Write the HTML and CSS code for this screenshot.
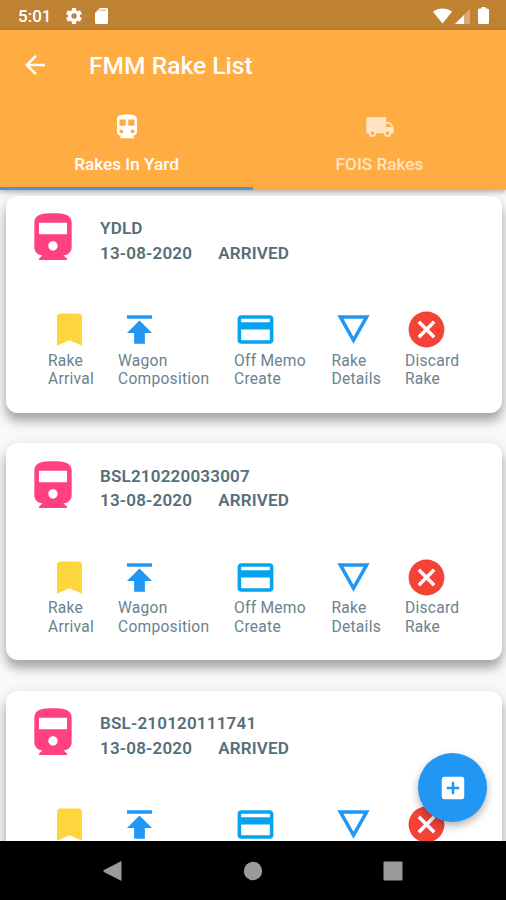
FILE: index.html
```html
<!DOCTYPE html>
<html lang="en">
<head>
<meta charset="utf-8">
<title>FMM Rake List</title>
<link rel="stylesheet" href="styles.css">
</head>
<body>
<svg class="sprite" aria-hidden="true">
  <symbol id="railway" viewBox="0 0 24 24"><path d="M4 15.5C4 17.43 5.57 19 7.5 19L6 20.5v.5h12v-.5L16.5 19c1.93 0 3.5-1.57 3.5-3.5V5c0-3.5-3.58-4-8-4s-8 .5-8 4v10.5zm8 1.5c-1.1 0-2-.9-2-2s.9-2 2-2 2 .9 2 2-.9 2-2 2zm6-7H6V5h12v5z"/></symbol>
  <symbol id="bookmark" viewBox="0 0 24 24"><path d="M17 3H7c-1.1 0-1.99.9-1.99 2L5 21l7-3 7 3V5c0-1.1-.9-2-2-2z"/></symbol>
  <symbol id="publish" viewBox="0 0 24 24"><path d="M5 4v2h14V4H5zm0 10h4v6h6v-6h4l-7-7-7 7z"/></symbol>
  <symbol id="card" viewBox="0 0 24 24"><path d="M20 4H4c-1.11 0-1.99.89-1.99 2L2 18c0 1.11.89 2 2 2h16c1.11 0 2-.89 2-2V6c0-1.11-.89-2-2-2zm0 14H4v-6h16v6zm0-10H4V6h16v2z"/></symbol>
  <symbol id="details" viewBox="0 0 24 24"><path d="M3 4l9 16 9-16H3zm3.38 2h11.25L12 16 6.38 6z"/></symbol>
  <symbol id="cancel" viewBox="0 0 24 24"><path d="M12 2C6.47 2 2 6.47 2 12s4.47 10 10 10 10-4.47 10-10S17.53 2 12 2zm5 13.59L15.59 17 12 13.41 8.41 17 7 15.59 10.59 12 7 8.41 8.41 7 12 10.59 15.59 7 17 8.41 13.41 12 17 15.59z"/></symbol>
</svg>
<div class="screen">
  <div class="status">
    <span class="clock">5:01</span>
    <svg class="gear" viewBox="2 2 20 20"><path d="M19.43 12.98c.04-.32.07-.64.07-.98s-.03-.66-.07-.98l2.11-1.65c.19-.15.24-.42.12-.64l-2-3.46c-.12-.22-.39-.3-.61-.22l-2.49 1c-.52-.4-1.08-.73-1.69-.98l-.38-2.65C14.46 2.18 14.25 2 14 2h-4c-.25 0-.46.18-.49.42l-.38 2.65c-.61.25-1.17.59-1.69.98l-2.49-1c-.23-.09-.49 0-.61.22l-2 3.46c-.13.22-.07.49.12.64l2.11 1.65c-.04.32-.07.65-.07.98s.03.66.07.98l-2.11 1.65c-.19.15-.24.42-.12.64l2 3.46c.12.22.39.3.61.22l2.49-1c.52.4 1.08.73 1.69.98l.38 2.65c.03.24.24.42.49.42h4c.25 0 .46-.18.49-.42l.38-2.65c.61-.25 1.17-.59 1.69-.98l2.49 1c.23.09.49 0 .61-.22l2-3.46c.12-.22.07-.49-.12-.64l-2.11-1.65zM12 15.5c-1.93 0-3.5-1.57-3.5-3.5s1.57-3.5 3.5-3.5 3.5 1.57 3.5 3.5-1.57 3.5-3.5 3.5z"/></svg>
    <svg class="sd" viewBox="0 0 13 16"><path d="M5 0h6.500Q13 0 13 1.500v13q0 1.500-1.500 1.500h-10Q0 16 0 14.500V5z"/><path class="sd-slots" d="M5 1.500h6v1.300H4z"/></svg>
    <svg class="wifi" viewBox="0 0 20 16"><path d="M0 3.500C6-1 14-1 20 3.500L10 16z"/></svg>
    <svg class="signal" viewBox="0 0 15 15"><path class="faint" d="M15 0v15H0z"/><path d="M9 6v9H0z"/></svg>
    <svg class="battery" viewBox="0 0 11 17"><path d="M3.500 0h4v1.500h2Q11 1.500 11 3v12.500Q11 17 9.500 17h-8Q0 17 0 15.500V3q0-1.500 1.500-1.500h2z"/></svg>
  </div>
  <header class="appbar">
    <div class="titlebar">
      <svg class="back" viewBox="0 0 24 24"><path d="M20 11H7.830l5.590-5.590L12 4l-8 8 8 8 1.410-1.410L7.830 13H20v-2z"/></svg>
      <h1>FMM Rake List</h1>
    </div>
    <nav class="tabs">
      <div class="tab active">
        <svg viewBox="0 0 24 24"><path d="M12 2c-4.420 0-8 .5-8 4v9.500C4 17.430 5.570 19 7.500 19L6 20.500v.5h12v-.5L16.500 19c1.930 0 3.500-1.570 3.500-3.500V6c0-3.500-3.580-4-8-4zM7.500 17c-.83 0-1.500-.67-1.500-1.500S6.670 14 7.500 14s1.500.67 1.500 1.500S8.330 17 7.500 17zm3.500-6H6V6h5v5zm5.500 6c-.83 0-1.500-.67-1.500-1.500s.67-1.500 1.500-1.500 1.500.67 1.500 1.500-.67 1.500-1.500 1.500zm1.500-6h-5V6h5v5z"/></svg>
        <span>Rakes In Yard</span>
      </div>
      <div class="tab">
        <svg viewBox="0 0 24 24"><path d="M20 8h-3V4H3c-1.100 0-2 .9-2 2v11h2c0 1.660 1.340 3 3 3s3-1.340 3-3h6c0 1.660 1.340 3 3 3s3-1.340 3-3h2v-5l-3-4zM6 18.500c-.83 0-1.500-.67-1.500-1.500s.67-1.500 1.500-1.500 1.500.67 1.500 1.500-.67 1.500-1.500 1.500zm13.500-9l1.960 2.500H17V9.500h2.500zm-1.500 9c-.83 0-1.500-.67-1.500-1.500s.67-1.500 1.500-1.500 1.500.67 1.500 1.500-.67 1.500-1.500 1.500z"/></svg>
        <span>FOIS Rakes</span>
      </div>
    </nav>
  </header>
  <main class="list">
    <article class="rake">
      <div class="head">
        <svg class="train"><use href="#railway"/></svg>
        <div class="info"><div>YDLD</div><div class="row"><span>13-08-2020</span><span>ARRIVED</span></div></div>
      </div>
      <div class="actions">
        <div><svg class="yellow"><use href="#bookmark"/></svg>Rake<br>Arrival</div>
        <div><svg class="blue"><use href="#publish"/></svg>Wagon<br>Composition</div>
        <div><svg class="sky"><use href="#card"/></svg>Off Memo<br>Create</div>
        <div><svg class="blue"><use href="#details"/></svg>Rake<br>Details</div>
        <div><svg class="red"><use href="#cancel"/></svg>Discard<br>Rake</div>
      </div>
    </article>
    <article class="rake">
      <div class="head">
        <svg class="train"><use href="#railway"/></svg>
        <div class="info"><div>BSL210220033007</div><div class="row"><span>13-08-2020</span><span>ARRIVED</span></div></div>
      </div>
      <div class="actions">
        <div><svg class="yellow"><use href="#bookmark"/></svg>Rake<br>Arrival</div>
        <div><svg class="blue"><use href="#publish"/></svg>Wagon<br>Composition</div>
        <div><svg class="sky"><use href="#card"/></svg>Off Memo<br>Create</div>
        <div><svg class="blue"><use href="#details"/></svg>Rake<br>Details</div>
        <div><svg class="red"><use href="#cancel"/></svg>Discard<br>Rake</div>
      </div>
    </article>
    <article class="rake">
      <div class="head">
        <svg class="train"><use href="#railway"/></svg>
        <div class="info"><div>BSL-210120111741</div><div class="row"><span>13-08-2020</span><span>ARRIVED</span></div></div>
      </div>
      <div class="actions">
        <div><svg class="yellow"><use href="#bookmark"/></svg></div>
        <div><svg class="blue"><use href="#publish"/></svg></div>
        <div><svg class="sky"><use href="#card"/></svg></div>
        <div><svg class="blue"><use href="#details"/></svg></div>
        <div><svg class="red"><use href="#cancel"/></svg></div>
      </div>
    </article>
  </main>
  <div class="fab"><svg viewBox="0 0 24 24"><path d="M19 3H5c-1.110 0-2 .9-2 2v14c0 1.100.89 2 2 2h14c1.100 0 2-.9 2-2V5c0-1.100-.9-2-2-2zm-2 10h-4v4h-2v-4H7v-2h4V7h2v4h4v2z"/></svg></div>
  <footer class="navbar">
    <svg viewBox="0 0 20 20"><path d="M18.500 0v20L1 11q-1.200-1 0-2z"/></svg>
    <svg viewBox="0 0 20 20"><circle cx="10" cy="10" r="9.200"/></svg>
    <svg viewBox="0 0 20 20"><rect x=".5" y=".5" width="19" height="19" rx="1"/></svg>
  </footer>
</div>
</body>
</html>
```
FILE: styles.css
```css
* { box-sizing: border-box; }
body { margin: 0; font-family: Roboto, "Liberation Sans", sans-serif; }
svg { display: block; fill: currentColor; flex: none; }
.sprite { position: absolute; width: 0; height: 0; }
.screen { position: relative; width: 506px; height: 900px; display: flex; flex-direction: column; overflow: hidden; background: #f9f9f9; }

.status { height: 30px; flex: none; display: flex; align-items: center; padding: 1px 17px 0 18px; background: #bf8132; color: #fff; }
.clock { width: 48px; font-size: 17px; font-weight: 500; }
.gear { width: 16px; height: 16px; }
.sd { width: 13px; height: 16px; margin-left: 13px; }
.sd-slots { fill: #d9b488; }
.wifi { width: 19px; height: 16px; margin-left: auto; }
.signal { width: 15px; height: 15px; margin: 2px 8px 0 3px; }
.signal .faint { opacity: .35; }
.battery { width: 11px; height: 17px; }

.appbar { position: relative; z-index: 2; height: 160px; flex: none; background: #ffac42; color: #fff; box-shadow: 0 2px 5px rgba(0,0,0,.3); }
.titlebar { height: 69px; display: flex; align-items: center; padding-left: 20px; }
.back { width: 30px; height: 30px; }
h1 { margin: 2px 0 0 39px; font-size: 24.6px; font-weight: 500; line-height: 30px; }
.tabs { display: flex; height: 91px; }
.tab { flex: 1; display: flex; flex-direction: column; align-items: center; padding-top: 13px; color: #ffe4c4; border-bottom: 3px solid transparent; }
.tab svg { width: 30px; height: 30px; }
.tab span { margin-top: 12px; font-size: 17.2px; font-weight: 500; line-height: 20px; }
.tab.active { color: #fff; border-bottom-color: #5393d5; }

.list { flex: 1; min-height: 0; overflow: hidden; padding: 5.5px 4.5px 0 5.5px; }
.rake { height: 217px; margin-bottom: 30.5px; padding: 15.5px 0 0 19.5px; border-radius: 12px; background: #fff; box-shadow: 0 8px 8px rgba(0,0,0,.2), 0 6px 16px rgba(0,0,0,.2); }
.head { display: flex; height: 97px; }
.train { width: 56px; height: 56px; color: #ff4081; }
.info { margin: 5px 0 0 19px; font-size: 17px; line-height: 24.6px; font-weight: 600; color: #546e7a; letter-spacing: .2px; }
.row { display: flex; gap: 26px; }
.actions { display: grid; grid-template-columns: 70px 116px 97.5px 73.5px auto; margin-left: 23px; font-size: 15.6px; line-height: 18.5px; letter-spacing: .25px; color: #6a838f; }
.actions svg { width: 43px; height: 43px; margin-bottom: .6px; }
.yellow { color: #fdd53c; }
.blue { color: #2196f3; }
.sky { color: #08a3f0; }
.red { color: #f44336; }

.fab { position: absolute; left: 418px; top: 753px; width: 69px; height: 69px; border-radius: 50%; background: #2196f3; color: #fff; display: grid; place-items: center; box-shadow: 0 4px 8px rgba(0,0,0,.3); }
.fab svg { width: 30px; height: 30px; }

.navbar { position: relative; height: 59px; flex: none; display: flex; justify-content: center; align-items: center; gap: 120px; background: #000; color: #9b9b9b; }
.navbar svg { width: 20px; height: 20px; }
```
